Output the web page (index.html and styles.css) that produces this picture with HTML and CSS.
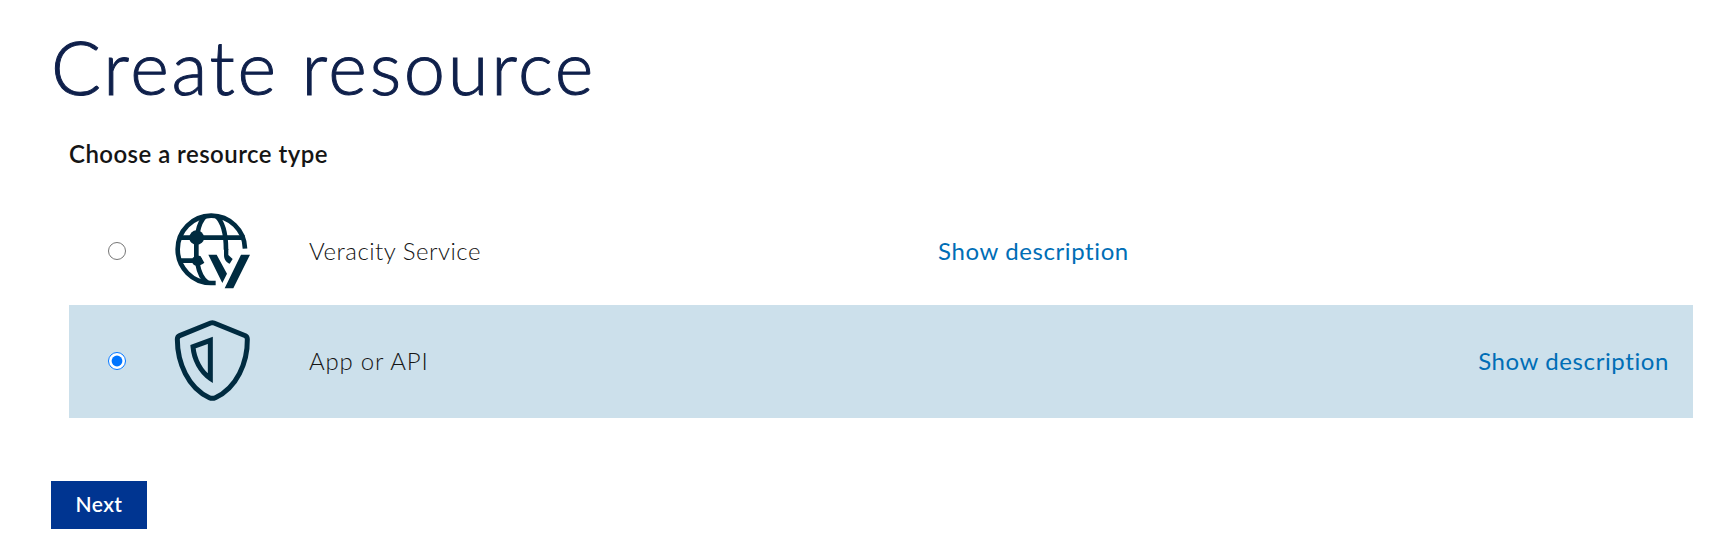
FILE: index.html
```html
<!DOCTYPE html>
<html lang="en">
<head>
<meta charset="utf-8">
<title>Create resource</title>
<link rel="stylesheet" href="styles.css">
</head>
<body>
<main class="page">
  <h1 class="title"><span>Create resource</span></h1>
  <h2 class="subtitle"><span>Choose a resource type</span></h2>
  <div class="options">
    <label class="option">
      <input class="radio" type="radio" name="type">
      <svg class="icon" viewBox="252 34 240 240" fill="none" stroke="#002b40" stroke-width="14">
        <path d="M465 147A101 101 0 1 0 363 250L377 250"/>
        <path d="M270 114H464M270 183H336"/>
        <path d="M347 48C333 60 327 76 323 98M319 125V180M322 190C327 218 337 240 353 249M378 48C399 66 408 100 408 150"/>
        <path d="M402 148H415V166L428 178L419 192C410 189 402 180 402 166Z" fill="#002b40" stroke="none"/>
        <circle cx="320" cy="114" r="22" fill="#002b40" stroke="none"/>
        <path d="M307 178C311 168 322 164 332 170L343 189C334 196 321 201 312 196C306 192 305 184 307 178Z" fill="#002b40" stroke="none"/>
        <path d="M355 165H380L411 222L397 250ZM453 165H480L430 266H404Z" fill="#002b40" stroke="none"/>
      </svg>
      <span class="name">Veracity Service</span>
      <a class="link">Show description</a>
    </label>
    <label class="option selected">
      <input class="radio" type="radio" name="type" checked>
      <svg class="icon shield" viewBox="252 57 240 249" fill="none" stroke="#002b40" stroke-width="15" stroke-linejoin="miter">
        <path d="M362 69Q367 67 372 69L466 107Q472 110 472 118C473 188 440 264 376 293Q367 297 358 293C294 264 262 188 262 118Q262 110 269 107Z"/>
        <path d="M361 121V235C332 216 312 178 309 140Z"/>
      </svg>
      <span class="name">App or API</span>
      <a class="link">Show description</a>
    </label>
  </div>
  <button class="next" type="button">Next</button>
</main>
</body>
</html>
```
FILE: styles.css
```css
* { box-sizing: border-box; }
body {
  margin: 0;
  background: #fff;
  color: #151515;
  font-family: Lato, "Open Sans", sans-serif;
}
.page {
  display: flex;
  flex-direction: column;
  align-items: flex-start;
  padding: 22px 37px 0 51px;
}
.title {
  margin: 0;
  height: 90px;
  line-height: 90px;
  font-size: 74px;
  font-weight: 300;
  letter-spacing: 2.7px;
  -webkit-text-stroke: 1px #0f204b;
  color: #0f204b;
  white-space: nowrap;
}
.subtitle {
  margin: 26px 0 0 18px;
  height: 32px;
  line-height: 32px;
  font-size: 24px;
  font-weight: 600;
  letter-spacing: 0.45px;
}
.options {
  align-self: stretch;
  margin: 26px 0 0 18px;
}
.option {
  display: grid;
  grid-template-columns: 105px 135px 629px 1fr;
  align-items: center;
  height: 109px;
  padding-right: 25px;
}
.option.selected {
  grid-template-columns: 105px 135px 1fr auto;
  height: 113px;
  padding: 0 24px 2px 0;
  background: #cce0eb;
}
.radio {
  width: 18px;
  height: 18px;
  margin: 0 0 0 39px;
}
.icon {
  width: 80px;
  height: 80px;
}
.icon.shield { height: 83px; }
.name {
  font-size: 24px;
  font-weight: 300;
  letter-spacing: 0.5px;
}
.selected .name { letter-spacing: 0.8px; }
.link {
  font-size: 24px;
  letter-spacing: 0.6px;
  color: #006eb6;
  white-space: nowrap;
}
.next {
  margin: 63px 0 0;
  width: 96px;
  height: 48px;
  padding: 0 0 3px;
  border: 0;
  background: #003591;
  color: #fff;
  font: 600 21px Lato, "Open Sans", sans-serif;
  letter-spacing: 0.4px;
}
```
